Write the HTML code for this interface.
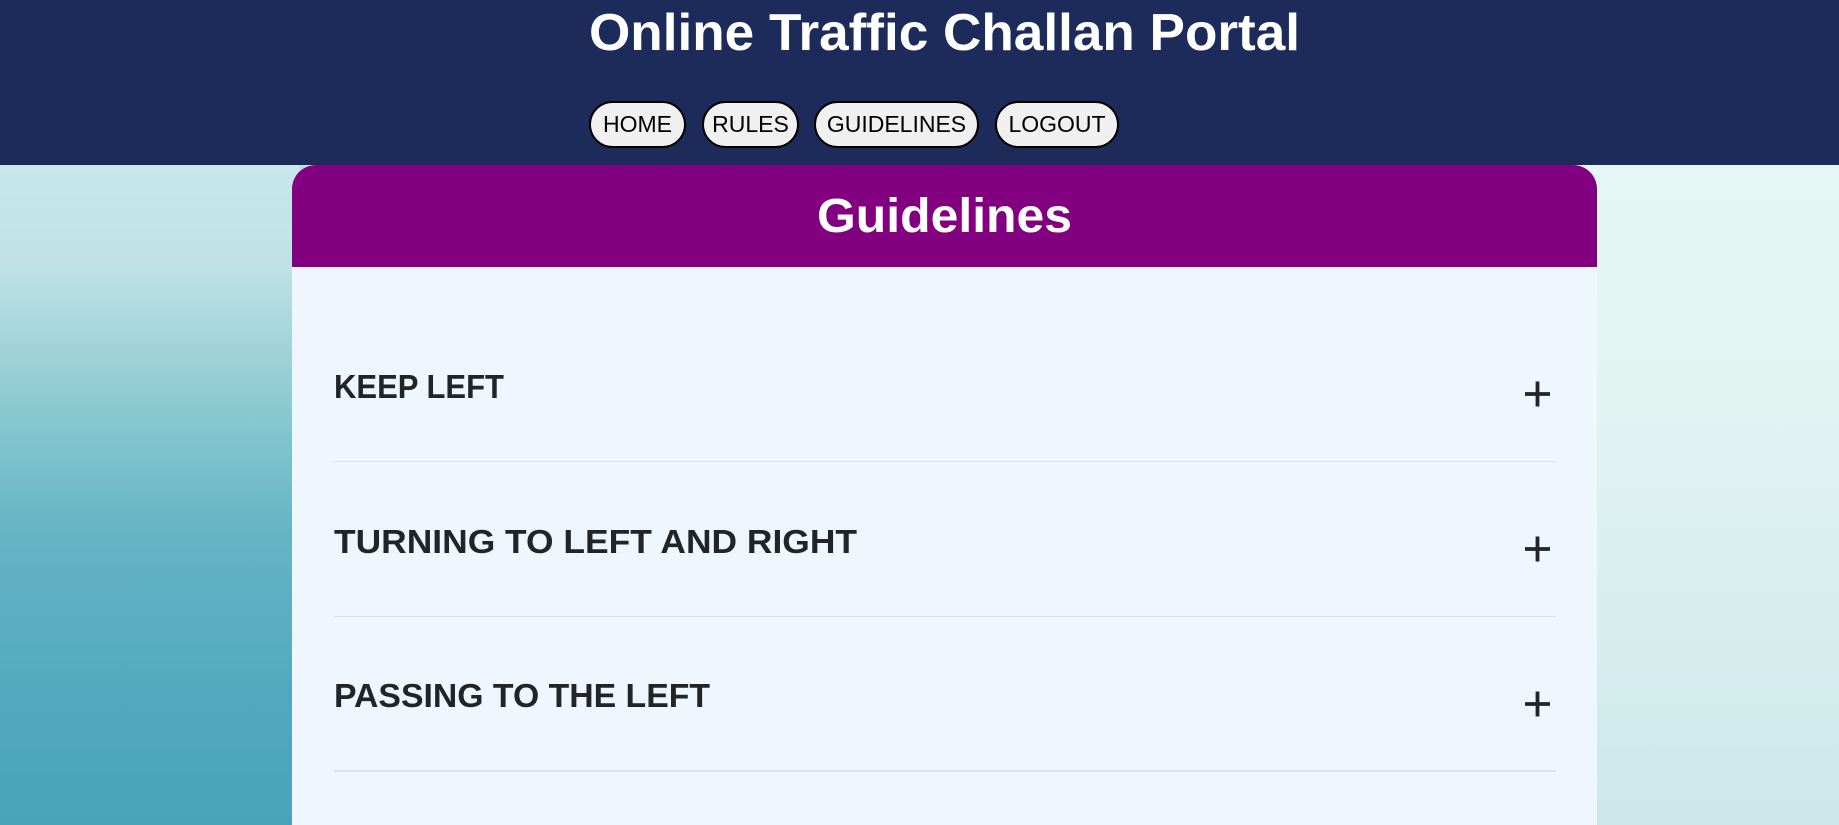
<!DOCTYPE html>
<html><head><meta charset="utf-8"><style>
*{margin:0;padding:0;box-sizing:border-box}
html,body{width:1839px;height:825px;overflow:hidden}
body{position:relative;font-family:"Liberation Sans","DejaVu Sans",sans-serif;
background:
radial-gradient(ellipse 500px 300px at 150px 80px, rgba(205,232,236,0.9), rgba(205,232,236,0) 100%),
linear-gradient(90deg,#5ab0c2 0%,#6bbcc8 16%,transparent 17%),
linear-gradient(180deg,#e9f9f7 0%,#e0f4f2 50%,#cde8ea 100%);}
.left{position:absolute;left:0;top:165px;width:300px;height:660px;
background:linear-gradient(180deg,#c9e7ea 0%,#bfe2e6 15%,#8fcbd2 35%,#65b5c4 55%,#52a9bf 80%,#4aa3bb 100%)}
.hdr{position:absolute;left:0;top:0;width:1839px;height:165px;background:#1c2b5a}
.btn{position:absolute;top:101px;height:47px;border:2px solid #000;border-radius:24px;background:#f0f0f0;
font-size:23px;color:#000;display:flex;align-items:center;justify-content:center}
.card{position:absolute;left:292px;top:165px;width:1305px;height:660px;background:#eff6fd;border-radius:24px 24px 0 0;overflow:hidden}
.ph{position:absolute;left:0;top:0;width:1305px;height:102px;background:#820080}
.line{position:absolute;left:42px;width:1222px;height:1px;background:#dbe1e6}
svg{position:absolute;left:0;top:0}
</style></head><body>
<div class="left"></div>
<div class="hdr"></div>
<div class="btn" style="left:589px;width:97px">HOME</div>
<div class="btn" style="left:702px;width:97px">RULES</div>
<div class="btn" style="left:814px;width:165px">GUIDELINES</div>
<div class="btn" style="left:995px;width:124px">LOGOUT</div>
<div class="card"><div class="ph"></div>
<div class="line" style="top:296px"></div>
<div class="line" style="top:451px"></div>
<div class="line" style="top:605px;height:2px"></div>
</div>
<svg width="1839" height="825">
<text x="589" y="50" font-size="52" font-weight="bold" fill="#fff" textLength="711" lengthAdjust="spacingAndGlyphs" font-family="Liberation Sans, sans-serif">Online Traffic Challan Portal</text>
<text x="817" y="232" font-size="48" font-weight="bold" fill="#fff" textLength="255" lengthAdjust="spacingAndGlyphs" font-family="Liberation Sans, sans-serif">Guidelines</text>
<g font-size="33" font-weight="bold" fill="#212529" font-family="Liberation Sans, sans-serif">
<text x="334" y="398" textLength="170" lengthAdjust="spacingAndGlyphs">KEEP LEFT</text>
<text x="334" y="553" textLength="523" lengthAdjust="spacingAndGlyphs">TURNING TO LEFT AND RIGHT</text>
<text x="334" y="707" textLength="376" lengthAdjust="spacingAndGlyphs">PASSING TO THE LEFT</text>
</g>
<g stroke="#212529" stroke-width="3.8">
<path d="M1525 394H1550M1537.5 381.5V406.5"/>
<path d="M1525 549H1550M1537.5 536.5V561.5"/>
<path d="M1525 704H1550M1537.5 691.5V716.5"/>
</g>
</svg>
</body></html>
